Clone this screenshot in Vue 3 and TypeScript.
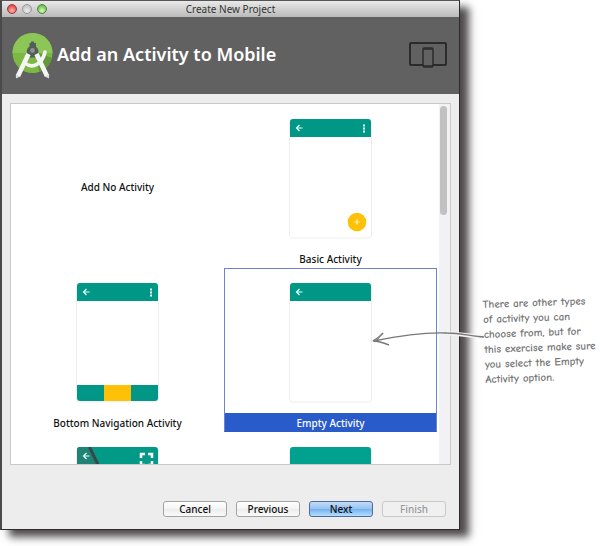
<script setup lang="ts">
import { ref } from 'vue'

type Kind = 'none' | 'basic' | 'bottom' | 'empty' | 'fullscreen' | 'plain'
interface Template {
  id: Kind
  label: string
}

const templates: Template[] = [
  { id: 'none', label: 'Add No Activity' },
  { id: 'basic', label: 'Basic Activity' },
  { id: 'bottom', label: 'Bottom Navigation Activity' },
  { id: 'empty', label: 'Empty Activity' },
  { id: 'fullscreen', label: '' },
  { id: 'plain', label: '' },
]
const selected = ref<Kind>('empty')
</script>

<template>
  <main class="page">
    <section class="window" aria-labelledby="window-title">
      <header class="titlebar">
        <div class="lights">
          <button type="button" class="light red" aria-label="Close"></button>
          <button type="button" class="light grey" aria-label="Minimize"></button>
          <button type="button" class="light green" aria-label="Zoom"></button>
        </div>
        <span id="window-title" class="window-title">Create New Project</span>
      </header>

      <div class="banner">
        <svg class="logo" width="42" height="48" viewBox="0 0 42 48" aria-hidden="true">
          <circle cx="20.500" cy="21" r="20" fill="#7cb944" />
          <path d="M.5 21a20 20 0 0 1 40 0z" fill="#8cc657" />
          <path d="M24 20l16 6a20 20 0 0 1-13 14z" fill="#64993a" />
          <path d="M17.500 11h1.500V9.500h3V11h2v3.500a6 6 0 0 1 1.500 8l-2.500 3h-5l-2.500-3a6 6 0 0 1 2-8z" fill="#555d5b" />
          <circle cx="20.500" cy="18.500" r="2.400" fill="#8a918e" />
          <path d="M16.500 22L6 44M24.500 22L35 44" stroke="#f5f5f5" stroke-width="4.600" fill="none" />
          <path d="M13 31c7 6 17 2 20-11" stroke="#f5f5f5" stroke-width="3.600" fill="none" stroke-linecap="round" />
          <path d="M3.800 42.500l4.400 2-4.200 2zM37.200 42.500l-4.400 2 4.200 2z" fill="#dedede" />
        </svg>
        <h1>Add an Activity to Mobile</h1>
        <svg class="devices" width="38" height="26" viewBox="0 0 38 26" aria-hidden="true">
          <rect x="1" y="1" width="36" height="22" rx="1" fill="none" stroke="#2b2b2b" stroke-width="2" />
          <rect x="14" y="6" width="10" height="19" rx="1.500" fill="#626262" stroke="#2b2b2b" stroke-width="1.500" />
          <path d="M14 7h10M14 24h10" stroke="#2b2b2b" stroke-width="1.500" />
        </svg>
      </div>

      <div class="body">
        <div class="list">
          <div class="grid" role="radiogroup" aria-label="Activity templates">
            <label v-for="t in templates" :key="t.id" class="tile" :class="{ selected: selected === t.id, bare: t.id === 'none' }">
              <input v-model="selected" type="radio" name="activity" :value="t.id" />
              <svg v-if="t.id !== 'none'" class="phone" width="83" height="120" viewBox="-1 0 83 120" aria-hidden="true">
                <rect x="-.5" y=".5" width="82" height="118.500" rx="3" fill="#fff" stroke="#eeeeee" />
                <template v-if="t.id === 'fullscreen'">
                  <path d="M3 0h75a3 3 0 0 1 3 3v115H0V3a3 3 0 0 1 3-3z" fill="#009a86" />
                  <path d="M3 0h10l28 60H0V3a3 3 0 0 1 3-3z" fill="#1f8376" />
                  <path d="M12.500 0l24 50" stroke="#37474a" stroke-width="3" />
                  <path d="M64 11V7h4M71 7h4v4M75 14v4h-4M68 18h-4v-4" stroke="#fff" stroke-width="2.500" fill="none" />
                </template>
                <path v-else-if="t.id === 'plain'" d="M3 0h75a3 3 0 0 1 3 3v115H0V3a3 3 0 0 1 3-3z" fill="#00a18e" />
                <path v-else d="M3 0h75a3 3 0 0 1 3 3v15H0V3a3 3 0 0 1 3-3z" fill="#009787" />
                <path v-if="t.id !== 'plain'" d="M12.500 9H6.500M9.500 6L6.500 9l3 3" stroke="#e6fffb" stroke-width="1.200" fill="none" />
                <g v-if="t.id === 'basic' || t.id === 'bottom'" fill="#e6fffb">
                  <rect x="73" y="5.500" width="2" height="2" />
                  <rect x="73" y="8.500" width="2" height="2" />
                  <rect x="73" y="11.500" width="2" height="2" />
                </g>
                <g v-if="t.id === 'basic'">
                  <circle cx="67" cy="103" r="9.300" fill="#ffc107" />
                  <path d="M64.500 103h5M67 100.500v5" stroke="#fff3c4" stroke-width="1.200" />
                </g>
                <g v-if="t.id === 'bottom'">
                  <path d="M0 102h81v13a3 3 0 0 1-3 3H3a3 3 0 0 1-3-3z" fill="#009787" />
                  <rect x="27" y="102" width="27" height="16" fill="#ffc107" />
                </g>
              </svg>
              <span v-if="t.label" class="caption">{{ t.label }}</span>
            </label>
          </div>
          <div class="track"><div class="thumb"></div></div>
        </div>
      </div>

      <footer class="actions">
        <button type="button">Cancel</button>
        <button type="button">Previous</button>
        <button type="button" class="primary">Next</button>
        <button type="button" disabled>Finish</button>
      </footer>
    </section>

    <aside class="note">
      <svg class="arrow" width="114" height="24" viewBox="0 0 114 24" aria-hidden="true">
        <path d="M66 7c16 0 30 2 46 4" fill="none" stroke="#f4f4f4" stroke-width="4" />
        <path d="M3 15C32 9 54 6 76 7c13 0 24 3 37 4" fill="none" stroke="#777" stroke-width="1.300" />
        <path d="M12 7C9 11 6 13 2 15c6 0 11 2 16 4" fill="none" stroke="#777" stroke-width="1.500" />
        <path d="M2 15l8-6-3 5z" fill="#888" />
      </svg>
      <p>
        There are other types<br />of activity you can<br />choose from, but for<br />this exercise make sure<br />you select the Empty<br />Activity option.
      </p>
    </aside>
  </main>
</template>

<style>
body {
  margin: 0;
  background: #fff;
}
</style>

<style scoped>
* {
  box-sizing: border-box;
}
.page {
  display: grid;
  grid-template-columns: minmax(0, 1fr) 116px;
  column-gap: 24px;
  height: 100vh;
  min-height: 400px;
  padding: 0 0 16px;
  overflow: hidden;
  font-family: "Noto Sans", "Open Sans", sans-serif;
}
.window {
  display: flex;
  flex-direction: column;
  min-height: 0;
  border: 1px solid #2c2c2c;
  border-top-color: #555;
  border-left: 2px solid #4a4a4a;
  background: #ededed;
  box-shadow: 9px 7px 8px #4f4b4c;
}
.titlebar {
  position: relative;
  flex: none;
  display: flex;
  align-items: center;
  justify-content: center;
  height: 16px;
  background: linear-gradient(#e9e9e9, #bababa);
}
.lights {
  position: absolute;
  left: 5px;
  top: 3px;
  display: flex;
  gap: 5px;
}
.light {
  width: 10px;
  height: 10px;
  padding: 0;
  border: 1px solid #777;
  border-radius: 50%;
}
.red {
  border-color: #9c3a37;
  background: radial-gradient(circle at 50% 70%, #ffb3ab, #e2504c 70%);
}
.grey {
  border-color: #999;
  background: radial-gradient(circle at 50% 70%, #eee, #c4c4c4 70%);
}
.green {
  border-color: #4c8a3c;
  background: radial-gradient(circle at 50% 70%, #d7ffb8, #6fbd55 70%);
}
.window-title {
  font-size: 10px;
  line-height: 16px;
  color: #333;
}
.banner {
  flex: none;
  display: flex;
  align-items: center;
  gap: 3px;
  height: 77px;
  padding: 0 12px 0 10px;
  background: #616161;
}
.logo,
.devices {
  flex: none;
}
.devices {
  margin-bottom: 2px;
}
h1 {
  flex: 1;
  margin: 0 0 4px;
  font-size: 18px;
  font-weight: 600;
  line-height: 24px;
  white-space: nowrap;
  color: #fff;
}
.body {
  flex: 1;
  display: flex;
  min-height: 0;
  padding: 9px 8px 0;
}
.list {
  flex: 1;
  display: flex;
  min-width: 0;
  overflow: hidden;
  border: 1px solid #c8c8c8;
  background: #fff;
}
.grid {
  flex: 1;
  display: grid;
  grid-template-columns: repeat(2, minmax(0, 1fr));
  grid-auto-rows: 164px;
}
.tile {
  position: relative;
  display: flex;
  flex-direction: column;
  align-items: center;
  justify-content: space-between;
  padding-top: 14px;
  border: 1px solid transparent;
}
.tile.bare {
  justify-content: center;
  padding-top: 0;
}
.tile input {
  position: absolute;
  opacity: 0;
  pointer-events: none;
}
.phone {
  flex: none;
}
.caption {
  width: 100%;
  padding-top: 2px;
  font-size: 10px;
  font-weight: 500;
  line-height: 16px;
  text-align: center;
  color: #111;
}
.selected {
  border-color: #6d83cc;
  border-bottom-color: #2a5bcb;
}
.selected .caption {
  background: #2a5bcb;
  color: #fff;
}
.track {
  flex: none;
  width: 13px;
  padding: 2px 3px 0 2px;
  background: linear-gradient(90deg, #fff 2px, #f2f2f4 2px);
}
.thumb {
  width: 7px;
  height: 109px;
  margin-left: 1px;
  border-radius: 4px;
  background: #c1c1c1;
}
.actions {
  flex: none;
  display: flex;
  justify-content: flex-end;
  gap: 9px;
  padding: 36px 13px 12px;
}
.actions button {
  width: 64px;
  height: 16px;
  padding: 0;
  border: 1px solid #a3a3a3;
  border-radius: 3px;
  background: linear-gradient(#fff, #f4f4f4 50%, #ececec 50%, #fafafa);
  font-family: inherit;
  font-size: 10px;
  font-weight: 500;
  line-height: 14px;
  color: #111;
}
.actions .primary {
  border-color: #536a9d;
  background: linear-gradient(#c3dcf6, #94c1f1 50%, #74b0ef 50%, #b2dffc);
}
.actions button:disabled {
  border-color: #c9c9c9;
  background: #f0f0f0;
  color: #999;
}
.note {
  position: relative;
  padding-top: 295px;
}
.note p {
  margin: 0;
  font-family: "Comic Neue", "Liberation Sans Narrow", Lato, sans-serif;
  font-size: 11px;
  font-weight: 700;
  line-height: 15px;
  white-space: nowrap;
  color: #777;
  transform: rotate(-2deg);
}
.arrow {
  position: absolute;
  top: 326px;
  right: 115px;
}
</style>
